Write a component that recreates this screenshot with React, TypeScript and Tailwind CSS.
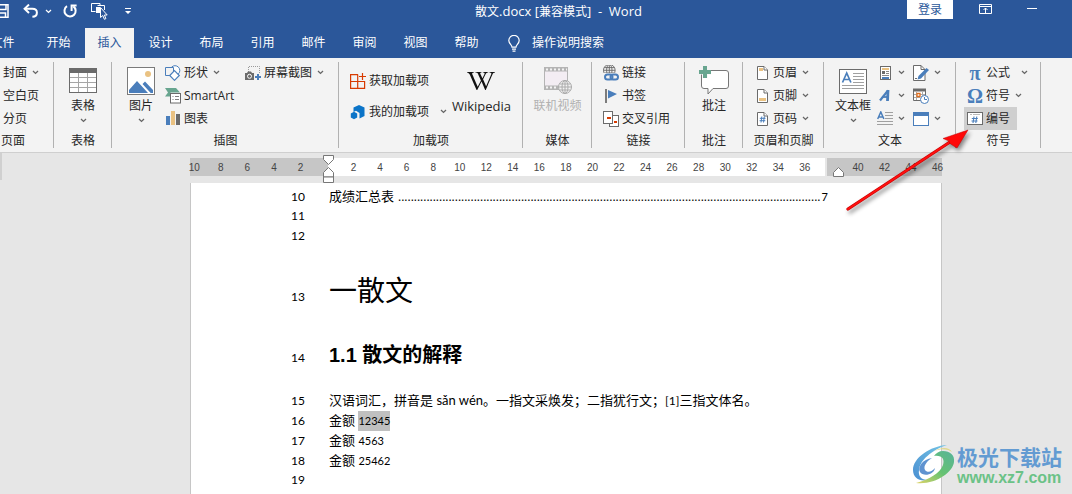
import type { ReactNode } from 'react';
import { FaWikipediaW } from 'react-icons/fa';

const BLUE = '#4a7ebb';
const GRAY = '#6b6b6b';

function Chevron({ color = '#666666' }: { color?: string }) {
  return (
    <svg width="7" height="5" viewBox="0 0 7 5" className="shrink-0" fill="none" stroke={color} strokeWidth="1.3">
      <path d="M1 1l2.5 2.4L6 1" />
    </svg>
  );
}

/* ---------- quick access bar ---------- */

function SaveIcon() {
  return (
    <svg width="14" height="14" viewBox="0 0 14 14" fill="none" stroke="#fff" strokeWidth="1.5">
      <path d="M1 .8h12v12.4H1z" />
      <path d="M3 .8v4.7h8V.8M4 13V9h6.5v4" />
    </svg>
  );
}

function UndoIcon() {
  return (
    <svg width="16" height="14" viewBox="0 0 16 14" fill="none" stroke="#fff" strokeWidth="2">
      <path d="M6 .6L1.6 4.8 6 9" />
      <path d="M2 4.8h7.4c6 0 6 7.6 0 8" />
    </svg>
  );
}

function RedoIcon() {
  return (
    <svg width="14" height="14" viewBox="0 0 14 14" fill="none" stroke="#fff" strokeWidth="2">
      <path d="M4 2.2a5.6 5.6 0 1 0 6.4.2" />
      <path d="M8.6 7V1.4H13.6" />
    </svg>
  );
}

function SelectIcon() {
  return (
    <svg width="17" height="17" viewBox="0 0 17 17" fill="none" stroke="#fff">
      <path d="M.5 9V.5H9V2M.5 8.5h4" />
      <path d="M5 4h4v6H5z" fill="#fff" stroke="none" />
      <path d="M6.5 2.5h7V7" />
      <path d="M9.5 4.5v10l2.3-2 1.6 3.8 1.5-.7-1.5-3.6h2.8z" fill="#2b579a" />
    </svg>
  );
}

function BulbIcon() {
  return (
    <svg width="12" height="17" viewBox="0 0 12 17" fill="none" stroke="#fff" strokeWidth="1.2">
      <path d="M4 12.2c0-2.4-3.2-3.4-3.2-6.6a5.2 5.2 0 0 1 10.4 0c0 3.2-3.2 4.2-3.2 6.6z" />
      <path d="M4 14.2h4M4.5 16.2h3" />
    </svg>
  );
}

/* ---------- ribbon icons ---------- */

function TableIcon() {
  return (
    <svg width="28" height="26" viewBox="0 0 28 26" shapeRendering="crispEdges">
      <rect x=".5" y=".5" width="27" height="24" fill="#fff" stroke={GRAY} />
      <rect width="28" height="5" fill={GRAY} />
      <path d="M1 9.5h26M1 14.5h26M1 19.5h26M9.5 5v19M18.5 5v19" stroke="#a6a6a6" />
    </svg>
  );
}

function PictureIcon() {
  return (
    <svg width="28" height="28" viewBox="0 0 28 28">
      <rect x=".5" y=".5" width="27" height="27" fill="#fff" stroke="#7a7a7a" />
      <circle cx="21" cy="7" r="3" fill="#eac282" />
      <path d="M2 26v-3l8-9 11 12zM15.5 17l2.500-2.500 8 8.500v3h-2.300z" fill={BLUE} />
    </svg>
  );
}

function ShapesIcon() {
  return (
    <svg width="16" height="16" viewBox="0 0 16 16" stroke={BLUE}>
      <circle cx="10" cy="5.500" r="4.800" fill="#fff" />
      <path d="M.5 2.500h8v8h-8z" fill="#f3f3f3" />
      <path d="M9.500 5.700l4.800 4.800-4.800 4.800-4.800-4.800z" fill="#fff" strokeWidth="1.200" />
    </svg>
  );
}

function SmartArtIcon() {
  return (
    <svg width="16" height="16" viewBox="0 0 16 16">
      <path d="M0 0h11l4 4.500H5.500v4H0l3-4z" fill="#68a58f" />
      <rect x="5.500" y="5.500" width="10" height="9.500" fill="#fff" stroke={GRAY} />
      <path d="M7.500 8.500h1M10 8.500h4M7.500 11.500h1M10 11.500h4" stroke="#808080" />
    </svg>
  );
}

function ChartIcon() {
  return (
    <svg width="14" height="15" viewBox="0 0 14 15" shapeRendering="crispEdges">
      <rect y="5" width="4" height="9" fill={BLUE} />
      <rect x="5" width="4" height="14" fill="#eac282" />
      <rect x="10" y="3" width="4" height="11" fill={GRAY} />
    </svg>
  );
}

function ScreenshotIcon() {
  return (
    <svg width="16" height="16" viewBox="0 0 16 16">
      <path d="M3.500 7V1.500h11V8" fill="none" stroke="#999" strokeDasharray="1 1" />
      <path d="M0 8h2l1-1.500h3L7 8h2v7H0z" fill={GRAY} />
      <circle cx="4.500" cy="11.300" r="2" fill={GRAY} stroke="#fff" />
      <path d="M13 9v6M10 12h6" stroke={BLUE} strokeWidth="2" />
    </svg>
  );
}

function GetAddinIcon() {
  return (
    <svg width="16" height="16" viewBox="0 0 16 16" fill="none" stroke="#d83b01" strokeWidth="1.200">
      <path d="M8 1.600H.6v13.800h14V8.500H.6M7.700 1.600v13.800M12.500 0v7M9 3.500h7" />
    </svg>
  );
}

function MyAddinIcon() {
  return (
    <svg width="16" height="16" viewBox="0 0 16 16" fill="#0b74c8">
      <path d="M9 1l5.500 2.500v8.500L9.500 14.500V9L6 6.800 3.500 8V3.500z" />
      <path d="M4 7.800l3.200 1.600v4L4 15.200.8 13.400v-4z" />
    </svg>
  );
}

function Globe({ stroke }: { stroke: string }) {
  return (
    <g fill="#f3f3f3" stroke={stroke}>
      <circle cx="7" cy="7" r="6.500" />
      <ellipse cx="7" cy="7" rx="3" ry="6.500" fill="none" />
      <path d="M7 .5v13M.5 7h13M1.500 4h11M1.500 10h11" fill="none" />
    </g>
  );
}

function VideoIcon() {
  return (
    <svg width="28" height="28" viewBox="0 0 28 28">
      <rect x=".5" y=".5" width="23" height="22" fill="#f3edf3" stroke="#b4b4b4" />
      <path d="M0 2.500h24M0 20.500h24" stroke="#b4b4b4" strokeWidth="4" />
      <path d="M2 2.500h21M2 20.500h21" stroke="#f3f3f3" strokeWidth="2" strokeDasharray="2 2" />
      <g transform="translate(14 13)">
        <Globe stroke="#ababab" />
      </g>
    </svg>
  );
}

function LinkIcon() {
  return (
    <svg width="16" height="16" viewBox="0 0 16 16">
      <g transform="translate(0 -1) scale(.9)">
        <Globe stroke="#666" />
      </g>
      <path d="M1 8h15v8H1z" fill="#f3f3f3" />
      <g fill="none" stroke={BLUE} strokeWidth="2">
        <rect x="2" y="9.500" width="7.500" height="5" rx="2.500" />
        <rect x="7.500" y="9.500" width="7.500" height="5" rx="2.500" />
      </g>
    </svg>
  );
}

function BookmarkIcon() {
  return (
    <svg width="12" height="14" viewBox="0 0 12 14">
      <path d="M1 0v14" stroke="#555" strokeWidth="1.500" />
      <path d="M3 1l9 4-9 4.500z" fill={BLUE} />
    </svg>
  );
}

function CrossRefIcon() {
  return (
    <svg width="16" height="16" viewBox="0 0 16 16" fill="#fff" stroke={GRAY} shapeRendering="crispEdges">
      <path d="M6.500 4.500h9v11h-9z" />
      <path d="M.5.500h9v12h-9z" />
      <path d="M4 6.500h4M11 10.500h3" stroke="#d83b01" strokeWidth="2" />
    </svg>
  );
}

function CommentIcon() {
  return (
    <svg width="30" height="30" viewBox="0 0 30 30">
      <path d="M4 4.500h23q2.500 0 2.500 2.500v13q0 2.500-2.500 2.500H14l-5 5.500v-5.500H5q-2.500 0-2.500-2.500V7q0-2.500 1.500-2.500z" fill="#fff" stroke="#777" />
      <path d="M6 0v12M0 6h12" stroke="#f3f3f3" strokeWidth="5" />
      <path d="M6 0v12M0 6h12" stroke="#68a58f" strokeWidth="4" />
    </svg>
  );
}

function PageIcon({ kind }: { kind: 'header' | 'footer' | 'number' }) {
  return (
    <svg width="11" height="14" viewBox="0 0 11 14" fill="#fff">
      <path d="M.5.500h6.500l3.500 3.500v9.500H.5z" stroke={GRAY} />
      <path d="M7 .5V4h3.500" stroke={GRAY} />
      {kind === 'header' && <path d="M2 2h4v3H2z" fill="#eac282" />}
      {kind === 'footer' && <path d="M2 9h7v3H2z" fill="#eac282" />}
      {kind === 'number' && <path d="M4.800 4.500l-.8 6M7.300 4.500l-.8 6M2.800 6.300h5.700M2.600 8.700h5.700" stroke={BLUE} />}
    </svg>
  );
}

function TextBoxIcon() {
  return (
    <svg width="28" height="25" viewBox="0 0 28 25">
      <rect x=".5" y=".5" width="27" height="24" fill="#fff" stroke={GRAY} />
      <path d="M14 4.500h11M14 7.500h11M14 10.500h11M14 13.500h11M3 16.500h22M3 19.500h22" stroke="#a0a0a0" />
      <path d="M3.500 13.500L7.700 4l4.200 9.500M5 10.500h5.500" fill="none" stroke={BLUE} strokeWidth="1.700" />
    </svg>
  );
}

function QuickPartsIcon() {
  return (
    <svg width="11" height="14" viewBox="0 0 11 14" fill="none" shapeRendering="crispEdges">
      <path d="M.5.500h10v13H.5z" fill="#fff" stroke={GRAY} />
      <path d="M2 3h7" stroke="#eac282" strokeWidth="2" />
      <path d="M6 5.500h3M6 7.500h3M2 9.500h7" stroke="#888" />
      <path d="M2 5h3v3H2z" fill={GRAY} />
      <path d="M2 11.500h7" stroke={BLUE} strokeWidth="2" />
    </svg>
  );
}

function WordArtIcon() {
  return (
    <svg width="12" height="13" viewBox="0 0 12 13" fill="none" stroke={BLUE}>
      <path d="M1 11.500L9 1.500" strokeWidth="2.200" />
      <path d="M9 1l-.5 11" strokeWidth="2.800" />
      <path d="M3.500 8h6" strokeWidth="1.800" />
    </svg>
  );
}

function DropCapIcon() {
  return (
    <svg width="16" height="16" viewBox="0 0 16 16" fill="none" stroke="#a0a0a0">
      <path d="M8 1.500h8M8 4.500h8M8 7.500h8M0 10.500h16M0 13.500h16" />
      <path d="M.700 8L3.800 1l3.100 7M1.800 6h4" stroke={BLUE} strokeWidth="1.500" />
    </svg>
  );
}

function SignatureIcon() {
  return (
    <svg width="16" height="16" viewBox="0 0 16 16">
      <path d="M.5.500h7.500l4 4v11H.5z" fill="#fff" stroke={GRAY} />
      <path d="M8 .5v4h4" fill="none" stroke={GRAY} />
      <path d="M2 13.500h2" stroke={GRAY} />
      <path d="M13.500 3l2.500 2-8 8.500-3.500 1 1-3.500z" fill={BLUE} />
    </svg>
  );
}

function DateIcon() {
  return (
    <svg width="16" height="16" viewBox="0 0 16 16">
      <path d="M.5 1.500h12v11H.5z" fill="#fff" stroke={GRAY} />
      <path d="M0 2h13" stroke={GRAY} strokeWidth="3" />
      <path d="M1 6.500h11M1 9.500h6M3.500 4v8M9.500 4v4" stroke="#aaa" />
      <path d="M4 5.500h3v3H4z" fill="#fff" stroke="#e07020" strokeWidth="1.300" />
      <circle cx="11.500" cy="11.500" r="4" fill="#fff" stroke={BLUE} />
      <path d="M11.500 9v2.500h2.500" fill="none" stroke={BLUE} />
    </svg>
  );
}

function ObjectIcon() {
  return (
    <svg width="16" height="14" viewBox="0 0 16 14" shapeRendering="crispEdges">
      <rect x=".5" y=".5" width="15" height="13" fill="#fff" stroke={BLUE} />
      <rect width="16" height="4" fill={BLUE} />
    </svg>
  );
}

function NumberIcon() {
  return (
    <svg width="16" height="13" viewBox="0 0 16 13">
      <rect x=".5" y=".5" width="15" height="12" fill="#fff" stroke={GRAY} />
      <path d="M3 2.500h2M6 2.500h7" stroke="#bbb" />
      <path d="M7 4.500l-1 6.500M9.800 4.500l-1 6.500M4.800 6.500h6M4.500 9h6" stroke={BLUE} strokeWidth="1.100" />
    </svg>
  );
}

/* ---------- ribbon building blocks ---------- */

function Group({ label, className, children }: { label: string; className: string; children: ReactNode }) {
  return (
    <section aria-label={label} className={`relative flex shrink-0 flex-col pt-[3px] ${className}`}>
      <div className="flex h-[70px] items-start">{children}</div>
      <div className="flex h-[22px] items-center justify-center whitespace-nowrap">{label}</div>
      <span className="absolute right-0 top-1 h-[86px] w-px bg-[#b1b1b1]" />
    </section>
  );
}

function BigButton({ icon, label, arrow, className = '' }: { icon: ReactNode; label: string; arrow?: boolean; className?: string }) {
  return (
    <button type="button" className={`flex flex-col items-center pt-1 ${className}`}>
      <span className="flex h-8 items-center justify-center">{icon}</span>
      <span className="h-[18px] whitespace-nowrap leading-[18px]">{label}</span>
      {arrow && (
        <span className="flex h-[10px] items-center">
          <Chevron />
        </span>
      )}
    </button>
  );
}

interface SmallButtonProps {
  icon?: ReactNode;
  label?: string;
  title?: string;
  arrow?: boolean;
  wide?: boolean;
  className?: string;
}

function SmallButton({ icon, label, title, arrow, wide, className = '' }: SmallButtonProps) {
  return (
    <button type="button" aria-label={label ? undefined : title} className={`flex h-[23px] items-center gap-[3px] whitespace-nowrap ${className}`}>
      {icon && <span className="flex w-4 shrink-0 justify-center">{icon}</span>}
      {label && <span>{label}</span>}
      {arrow && (
        <span className={wide ? 'ml-2' : 'ml-[2px]'}>
          <Chevron />
        </span>
      )}
    </button>
  );
}

function Glyph({ children }: { children: string }) {
  return <span className="font-['Liberation_Serif',serif] text-[20px] font-bold leading-5 text-[#4a7ebb]">{children}</span>;
}

function Arrow() {
  return (
    <svg
      width="130"
      height="90"
      viewBox="0 0 130 90"
      className="pointer-events-none absolute right-[68px] top-[70px] z-10 drop-shadow-[2px_3px_2px_rgba(0,0,0,0.45)]"
    >
      <path d="M5 81L107 14" stroke="#c80000" strokeWidth="3.200" strokeLinecap="round" />
      <path d="M5 81L107 14" stroke="#ff1010" strokeWidth="2" strokeLinecap="round" />
      <path d="M125 2L100 10.500l5.500 2.300 1.800 3L114 20z" fill="#ff0808" stroke="#c00000" strokeWidth=".5" />
    </svg>
  );
}

/* ---------- document ---------- */

const tabs = ['开始', '插入', '设计', '布局', '引用', '邮件', '审阅', '视图', '帮助'];

const rulerMarks = [
  '10', '8', '6', '4', '2', '', '2', '4', '6', '8', '10', '12', '14', '16', '18',
  '20', '22', '24', '26', '28', '30', '32', '34', '36', '', '40', '42', '44', '46',
];

function Ruler() {
  return (
    <div className="relative mt-[5px] grid h-4">
      <div className="col-start-1 row-start-1 flex">
        <div className="w-[138px] bg-[#c6c6c6]" />
        <div className="flex-1 bg-white" />
        <div className="ml-[2px] w-[115px] bg-[#c6c6c6]" />
      </div>
      <div className="col-start-1 row-start-1 -ml-[9px] -mr-[9px] flex items-center pt-[2px] font-['Liberation_Sans',sans-serif] text-[10px] text-[#444444]">
        {rulerMarks.map((mark, i) => (
          <span key={i} className="flex-1 text-center">
            {mark}
          </span>
        ))}
      </div>
      <svg width="11" height="28" viewBox="0 0 11 28" className="absolute -top-[3px] left-[133px]" fill="#fff" stroke="#777">
        <path d="M.5.500h10v4l-5 5-5-5z" />
        <path d="M.5 22V17.500l5-5 5 5V22z" />
        <path d="M.5 22h10v5.500H.5z" />
      </svg>
      <svg width="11" height="10" viewBox="0 0 11 10" className="absolute right-[98px] top-[9px]" fill="#fff" stroke="#777">
        <path d="M.5 9.500V5.500l5-5 5 5v4z" />
      </svg>
    </div>
  );
}

function Line({ no, className = 'h-5', children }: { no: number; className?: string; children?: ReactNode }) {
  return (
    <div className={`flex items-baseline ${className}`}>
      <span className="w-[114px] shrink-0 text-right font-['Lato',sans-serif] text-[12px] leading-5">{no}</span>
      <div className="ml-6 flex w-[499px] shrink-0 items-baseline whitespace-nowrap">{children}</div>
    </div>
  );
}

function Num({ children, className = 'text-[11px]' }: { children: ReactNode; className?: string }) {
  return <span className={`font-['Lato',sans-serif] ${className}`}>{children}</span>;
}

function Watermark() {
  return (
    <div className="absolute bottom-[6px] right-[10px] flex items-center gap-[1px]">
      <svg width="44" height="44" viewBox="0 0 44 44" fill="none">
        <defs>
          <linearGradient id="outer" x1="1" y1="0" x2="0" y2="1">
            <stop offset="0" stopColor="#74c4e4" />
            <stop offset="1" stopColor="#4a8fd2" />
          </linearGradient>
          <linearGradient id="leaf" x1="1" y1="0" x2="0" y2="1">
            <stop offset="0" stopColor="#57b39a" />
            <stop offset=".5" stopColor="#66c272" />
            <stop offset="1" stopColor="#e0d468" />
          </linearGradient>
        </defs>
        <path d="M35 1C18 2 1 14 1 26c0 8 7 12 15 10-7 0-10-4-9-10C8 16 20 6 35 1z" fill="url(#outer)" />
        <path d="M20 14c-9 1-15 9-12 14 3 5 14 3 15-4-3 4-8 5-10 2-2-4 2-9 7-12z" fill="#5f93d0" />
        <path d="M22 12c8-1 11 3 9 9-3 8-13 14-27 18 20 2 37-11 38-21 1-7-4-11-11-11-4 0-7 2-9 5z" fill="url(#leaf)" />
        <path d="M22 7c8-4 15-4 18 1-4-3-10-4-18-1z" fill="#e0d98a" />
      </svg>
      <div className="flex flex-col">
        <span className="whitespace-nowrap text-[21px] font-bold leading-6 text-[#639bd2]">极光下载站</span>
        <span className="font-['Liberation_Sans',sans-serif] text-[16px] font-bold leading-[18px] text-[#6bc287]">www.xz7.com</span>
      </div>
    </div>
  );
}

export default function App() {
  return (
    <div className="relative flex min-h-screen flex-col overflow-hidden bg-[#e6e6e6] font-['Open_Sans','Noto_Sans_CJK_SC',sans-serif] text-[12px] leading-4 text-[#262626]">
      <header className="bg-[#2b579a] text-white">
        <div className="flex h-7 items-start">
          <div className="-ml-[5px] flex h-[22px] w-[215px] shrink-0 items-center">
            <button type="button" aria-label="保存"><SaveIcon /></button>
            <button type="button" aria-label="撤消" className="ml-[14px] flex items-center gap-[6px]">
              <UndoIcon />
              <Chevron color="#fff" />
            </button>
            <button type="button" aria-label="恢复" className="ml-[11px]"><RedoIcon /></button>
            <button type="button" aria-label="选择对象" className="ml-[14px]"><SelectIcon /></button>
            <button type="button" aria-label="自定义快速访问工具栏" className="ml-[17px]">
              <svg width="6" height="6" viewBox="0 0 6 6" fill="#fff">
                <path d="M0 0h6v1H0zM0 3h6L3 6z" />
              </svg>
            </button>
          </div>
          <h1 className="flex-1 whitespace-pre text-center leading-[22px]">
            散文<span className="text-[13px]">.docx [</span>兼容模式<span className="text-[13px]">]  -  Word</span>
          </h1>
          <div className="flex w-[165px] shrink-0 items-start">
            <button type="button" className="h-[19px] w-[46px] bg-white leading-[18px] text-[#2b579a]">登录</button>
            <button type="button" aria-label="功能区显示选项" className="ml-[26px] mt-1">
              <svg width="13" height="10" viewBox="0 0 13 10" fill="none" stroke="#fff">
                <path d="M.5.500h12v9H.5zM.5 2.500h12M6.500 9V4M4.500 6l2-2 2 2" />
              </svg>
            </button>
            <button type="button" aria-label="最小化" className="ml-[35px] mt-2 h-px w-[10px] bg-white" />
          </div>
        </div>
        <nav className="flex h-[30px] items-stretch gap-[2px]">
          <button type="button" className="-ml-[22px] mr-[5px] w-[49px] shrink-0">文件</button>
          {tabs.map((tab) => (
            <button
              key={tab}
              type="button"
              className={tab === '插入' ? 'w-[49px] shrink-0 bg-[#f3f3f3] text-[#2b579a]' : 'w-[49px] shrink-0'}
            >
              {tab}
            </button>
          ))}
          <button type="button" className="ml-[15px] flex items-center gap-3">
            <BulbIcon />
            操作说明搜索
          </button>
        </nav>
      </header>

      <div className="relative flex h-[95px] border-b border-[#cfcfcf] bg-[#f3f3f3]">
        <Group label="页面" className="w-[54px] [&>div:last-of-type]:pr-7">
          <div className="flex flex-col pl-[3px]">
            <SmallButton label="封面" arrow />
            <SmallButton label="空白页" />
            <SmallButton label="分页" />
          </div>
        </Group>
        <Group label="表格" className="w-[58px]">
          <BigButton icon={<TableIcon />} label="表格" arrow className="w-full" />
        </Group>
        <Group label="插图" className="w-[227px]">
          <BigButton icon={<PictureIcon />} label="图片" arrow className="ml-[15px] w-7" />
          <div className="ml-[10px] flex w-[80px] flex-col">
            <SmallButton icon={<ShapesIcon />} label="形状" arrow />
            <SmallButton icon={<SmartArtIcon />} label="SmartArt" />
            <SmallButton icon={<ChartIcon />} label="图表" />
          </div>
          <SmallButton icon={<ScreenshotIcon />} label="屏幕截图" arrow />
        </Group>
        <Group label="加载项" className="w-[184px]">
          <div className="ml-[11px] flex flex-col pt-1">
            <SmallButton icon={<GetAddinIcon />} label="获取加载项" className="h-[31px]" />
            <SmallButton icon={<MyAddinIcon />} label="我的加载项" arrow wide className="h-[31px]" />
          </div>
          <BigButton
            icon={<FaWikipediaW size={28} color="#111" />}
            label="Wikipedia"
            className="ml-auto mr-3 text-[13px]"
          />
        </Group>
        <Group label="媒体" className="w-[69px]">
          <BigButton icon={<VideoIcon />} label="联机视频" className="w-full text-[#b1b1b1]" />
        </Group>
        <Group label="链接" className="w-[93px]">
          <div className="flex flex-col pl-[11px]">
            <SmallButton icon={<LinkIcon />} label="链接" />
            <SmallButton icon={<BookmarkIcon />} label="书签" />
            <SmallButton icon={<CrossRefIcon />} label="交叉引用" />
          </div>
        </Group>
        <Group label="批注" className="w-[58px]">
          <BigButton icon={<CommentIcon />} label="批注" className="w-full" />
        </Group>
        <Group label="页眉和页脚" className="w-[81px]">
          <div className="flex flex-col pl-[11px]">
            <SmallButton icon={<PageIcon kind="header" />} label="页眉" arrow />
            <SmallButton icon={<PageIcon kind="footer" />} label="页脚" arrow />
            <SmallButton icon={<PageIcon kind="number" />} label="页码" arrow />
          </div>
        </Group>
        <Group label="文本" className="w-[132px]">
          <BigButton icon={<TextBoxIcon />} label="文本框" arrow className="ml-[11px] w-9" />
          <div className="ml-[6px] flex flex-col">
            <SmallButton icon={<QuickPartsIcon />} title="文档部件" arrow />
            <SmallButton icon={<WordArtIcon />} title="艺术字" arrow />
            <SmallButton icon={<DropCapIcon />} title="首字下沉" arrow />
          </div>
          <div className="ml-2 flex flex-col">
            <SmallButton icon={<SignatureIcon />} title="签名行" arrow />
            <SmallButton icon={<DateIcon />} title="日期和时间" />
            <SmallButton icon={<ObjectIcon />} title="对象" arrow />
          </div>
        </Group>
        <Group label="符号" className="w-[85px]">
          <div className="flex flex-col items-start pl-2">
            <SmallButton icon={<Glyph>π</Glyph>} label="公式" arrow wide className="px-[3px]" />
            <SmallButton icon={<Glyph>Ω</Glyph>} label="符号" arrow className="px-[3px]" />
            <SmallButton icon={<NumberIcon />} label="编号" className="w-[53px] bg-[#cfcfcf] px-[3px]" />
          </div>
          <Arrow />
        </Group>
      </div>

      <main className="flex flex-1 justify-center pl-[60px]">
        <span className="absolute left-0 h-[27px] w-[2px] bg-[#d0d0d0]" />
        <div className="flex w-[752px] shrink-0 flex-col">
          <Ruler />
          <article className="mt-[9px] flex-1 border-x border-[#c6c6c6] bg-white pt-[3px] text-[13px] leading-5 text-black">
            <Line no={10}>
              <span>成绩汇总表</span>
              <span className="ml-1 flex-1 font-['Open_Sans',sans-serif] text-[12px]">{'.'.repeat(134)}</span>
              <Num>7</Num>
            </Line>
            <Line no={11} />
            <Line no={12} />
            <Line no={13} className="mt-6 h-10">
              <h2 className="text-[28px] leading-10">一散文</h2>
            </Line>
            <Line no={14} className="mt-[30px] h-[30px]">
              <h3 className="font-['Liberation_Sans','Noto_Sans_CJK_SC',sans-serif] text-[20px] font-bold leading-[30px]">1.1 散文的解释</h3>
            </Line>
            <Line no={15} className="mt-5 h-5">
              <p>汉语词汇，拼音是 <Num className="text-[13px]">sǎn wén</Num>。一指文采焕发；二指犹行文；<Num className="text-[12px]">[1]</Num>三指文体名。</p>
            </Line>
            <Line no={16}>
              <p>金额 <Num className="inline-block h-5 bg-[#c0c0c0] text-[11px]">12345</Num></p>
            </Line>
            <Line no={17}>
              <p>金额 <Num>4563</Num></p>
            </Line>
            <Line no={18}>
              <p>金额 <Num>25462</Num></p>
            </Line>
            <Line no={19} />
          </article>
        </div>
      </main>
      <Watermark />
    </div>
  );
}
